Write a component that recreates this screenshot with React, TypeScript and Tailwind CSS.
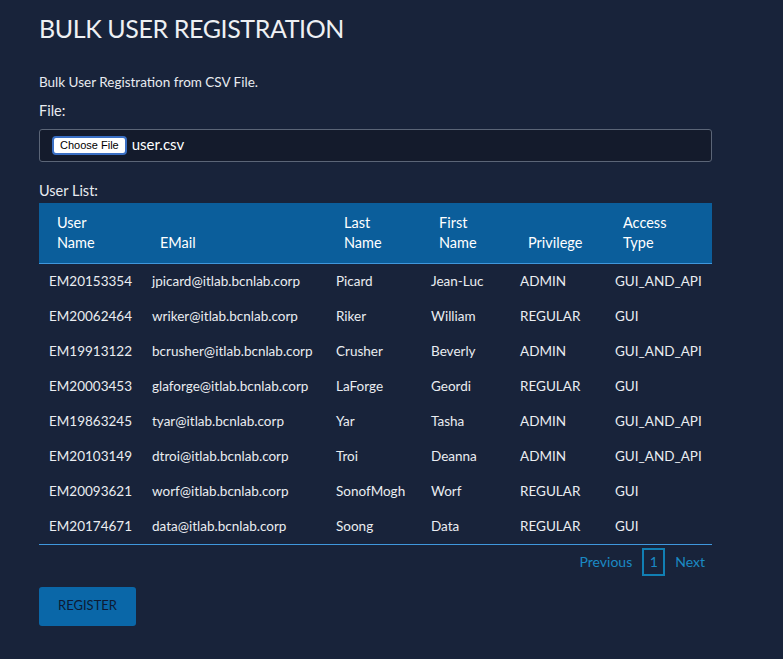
import React from "react";

const users = [
  ["EM20153354", "jpicard@itlab.bcnlab.corp", "Picard", "Jean-Luc", "ADMIN", "GUI_AND_API"],
  ["EM20062464", "wriker@itlab.bcnlab.corp", "Riker", "William", "REGULAR", "GUI"],
  ["EM19913122", "bcrusher@itlab.bcnlab.corp", "Crusher", "Beverly", "ADMIN", "GUI_AND_API"],
  ["EM20003453", "glaforge@itlab.bcnlab.corp", "LaForge", "Geordi", "REGULAR", "GUI"],
  ["EM19863245", "tyar@itlab.bcnlab.corp", "Yar", "Tasha", "ADMIN", "GUI_AND_API"],
  ["EM20103149", "dtroi@itlab.bcnlab.corp", "Troi", "Deanna", "ADMIN", "GUI_AND_API"],
  ["EM20093621", "worf@itlab.bcnlab.corp", "SonofMogh", "Worf", "REGULAR", "GUI"],
  ["EM20174671", "data@itlab.bcnlab.corp", "Soong", "Data", "REGULAR", "GUI"],
];

const headers: [string, string][] = [
  ["User", "Name"],
  ["", "EMail"],
  ["Last", "Name"],
  ["First", "Name"],
  ["", "Privilege"],
  ["Access", "Type"],
];

const widths = ["w-[103px]", "w-[184px]", "w-[95px]", "w-[89px]", "w-[95px]", "w-[107px]"];

export default function App() {
  return (
    <div className="min-h-[659px] w-full bg-[#18233a] font-['Lato',sans-serif] text-[#e8ebf0]">
      <div className="ml-[39px] w-[673px] pt-[13px]">
        <h1 className="text-[25px] leading-[30px] tracking-[-0.4px] text-[#eef0f3]">BULK USER REGISTRATION</h1>

        <p className="mt-[30px] text-[13.5px] leading-[18px]">Bulk User Registration from CSV File.</p>
        <label className="mt-[10px] block text-[14.5px] leading-[20px]">File:</label>

        <div className="mt-[8px] flex h-[33px] items-center rounded-[3px] border border-[#5b6577] bg-[#141b2c] pl-[12px]">
          <span className="flex h-[19px] items-center rounded-[4px] border-2 border-[#3a6fc4] bg-white px-[6px] font-['Liberation_Sans',sans-serif] text-[11px] text-black">
            Choose File
          </span>
          <span className="-mt-[3px] ml-[5px] text-[15px] text-white">user.csv</span>
        </div>

        <div className="mt-[19px] text-[14.5px] leading-[20px]">User List:</div>

        <table className="mt-[2px] w-[673px] table-fixed border-collapse">
          <thead>
            <tr className="border-b border-[#3f97dc] bg-[#0b5e9b]">
              {headers.map((h, i) => (
                <th
                  key={i}
                  className={`${widths[i]} pb-[10px] pl-[18px] pt-[10px] text-left align-bottom text-[14.5px] font-normal leading-[20px] text-white`}
                >
                  {h[0] && <div>{h[0]}</div>}
                  <div>{h[1]}</div>
                </th>
              ))}
            </tr>
          </thead>
          <tbody>
            {users.map((u, r) => (
              <tr key={r} className="h-[35px]">
                {u.map((c, i) => (
                  <td key={i} className="whitespace-nowrap pl-[10px] text-[13.5px] text-[#eaedf1]">
                    {c}
                  </td>
                ))}
              </tr>
            ))}
          </tbody>
        </table>
        <div className="h-px bg-[#3f97dc]" />

        <div className="mt-[3px] flex h-[28px] items-center justify-end pr-[7px] text-[14px] text-[#1b8ac4]">
          <span>Previous</span>
          <span className="mx-[10px] flex h-[28px] w-[23px] items-center justify-center border-2 border-[#117fb3]">1</span>
          <span>Next</span>
        </div>

        <button className="mt-[11px] h-[39px] w-[97px] rounded-[3px] bg-[#0a67a8] text-[13px] text-[#0d1a33]">
          REGISTER
        </button>
      </div>
    </div>
  );
}
